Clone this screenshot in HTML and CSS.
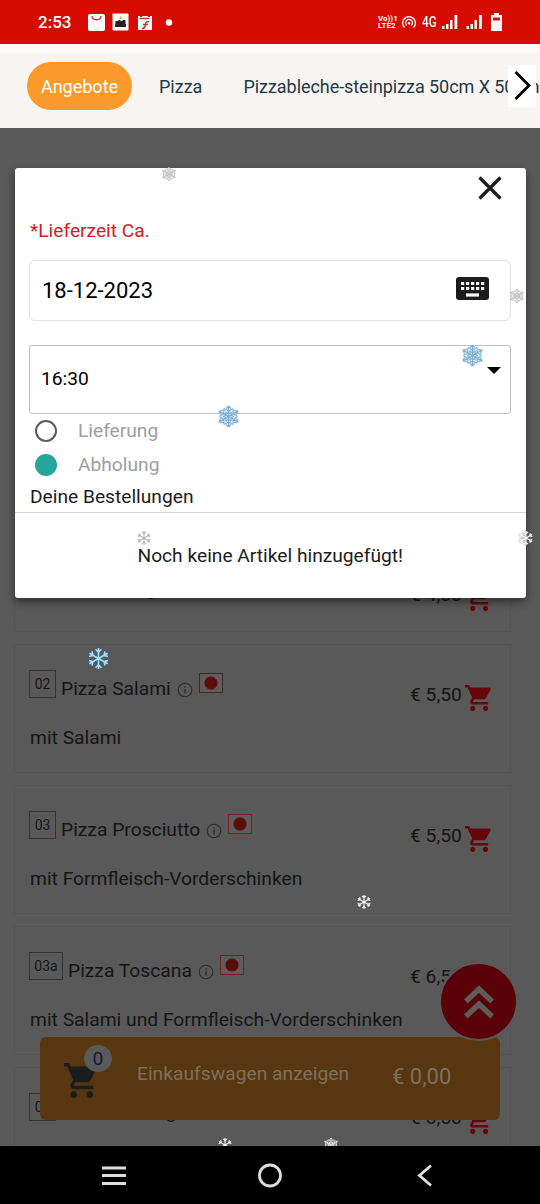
FILE: index.html
```html
<!DOCTYPE html>
<html lang="de">
<head>
<meta charset="utf-8">
<title>Bestellung</title>
<link rel="stylesheet" href="styles.css">
</head>
<body>
<svg class="defs" aria-hidden="true">
  <symbol id="cart" viewBox="1 2 21 20" preserveAspectRatio="none"><path d="M7 18c-1.1 0-1.99.9-1.99 2S5.900 22 7 22s2-.9 2-2-.9-2-2-2zM1 2v2h2l3.600 7.590-1.350 2.450c-.160.280-.250.610-.250.960 0 1.100.900 2 2 2h12v-2H7.420c-.140 0-.250-.110-.250-.250l.030-.120.900-1.630h7.450c.750 0 1.410-.410 1.750-1.030l3.580-6.490A1 1 0 0 0 20.010 4H5.210l-.940-2H1zm16 16c-1.100 0-1.990.900-1.990 2s.890 2 1.990 2 2-.900 2-2-.900-2-2-2z"/></symbol>
  <symbol id="info" viewBox="0 0 16 16"><circle cx="8" cy="8" r="6.800" fill="none" stroke="currentColor" stroke-width="1.100"/><path d="M8 7v4.500M8 4.200v1.500" stroke="currentColor" stroke-width="1.300"/></symbol>
  <symbol id="flake" viewBox="-10 -10 20 20"><g fill="none" stroke="currentColor" stroke-width="1.500">
    <path id="a" d="M0 0V-10M-2.800 -8.800L0 -6L2.800 -8.800"/><use href="#a" transform="rotate(60)"/><use href="#a" transform="rotate(120)"/><use href="#a" transform="rotate(180)"/><use href="#a" transform="rotate(240)"/><use href="#a" transform="rotate(300)"/></g></symbol>
  <symbol id="crystal" viewBox="-10 -10 20 20"><g fill="none" stroke="currentColor" stroke-width="1">
    <path id="b" d="M0 0V-10.500M-2.200 -7.500L0 -10.300L2.200 -7.500M-4.200 -7.500L0 -5.200L4.200 -7.500M-2.500 -4.400L0 -2.500L2.500 -4.400"/><use href="#b" transform="rotate(60)"/><use href="#b" transform="rotate(120)"/><use href="#b" transform="rotate(180)"/><use href="#b" transform="rotate(240)"/><use href="#b" transform="rotate(300)"/></g></symbol>
</svg>
<div class="phone">
  <header class="status">
    <span class="clock">2:53</span>
    <svg class="apps" viewBox="0 0 90 20">
      <rect x="0" y="1" width="17" height="17" rx="2" fill="#fff"/><path d="M4 3c0 5 9 5 9 0" fill="none" stroke="#b7352c" stroke-width="1.300"/>
      <rect x="24.500" y="0.500" width="16" height="17" rx="1" fill="#fff"/><path d="M27.500 8h3v-1h2v1h2v-1h3v4h.5v3H27z" fill="#222"/><path d="M31 6l1.700-3 1.600 3z" fill="#e4a43c"/>
      <path d="M50 3h2v1h2V3h6v1h2V3h2v14H50z" fill="#fff"/><path d="M51.500 5.500h10M61 8.500c-4-.5-3 2-4 5-.5 2-1.500 2-3 2M55 11.500h5" fill="none" stroke="#c43228" stroke-width="1.500"/>
      <circle cx="81" cy="9.500" r="3.200" fill="#fff"/>
    </svg>
    <span class="volte"><span>Vo))1</span><span>LTE2</span></span>
    <svg class="hotspot" viewBox="0 0 16 14" fill="none" stroke="#fff" stroke-width="1.300"><path d="M3.500 12.500a6.400 6.400 0 1 1 9 0M5.700 10.500a3.500 3.500 0 1 1 4.600 0"/><circle cx="8" cy="8.300" r="1.200" fill="#fff" stroke="none"/></svg>
    <span class="net">4G</span>
    <svg class="signals" viewBox="0 0 62 20" fill="#fff"><path d="M0 13h2.500v3H0zM4 11h2.500v5H4zM8 7h2.500v9H8zM12.500 2h2.800v14h-2.800zM24.500 13h2.500v3h-2.500zM28.500 11h2.500v5h-2.500zM32.500 7h2.500v9h-2.500zM37 2h2.800v14H37z"/><path d="M52 0h5v2h3v16H49V2h3z"/><path d="M51 4.500h7v3h-7z" fill="#d80b00"/></svg>
  </header>
  <nav class="tabs">
    <span class="tab active">Angebote</span>
    <span class="tab pizza">Pizza</span>
    <span class="tab long">Pizzableche-steinpizza 50cm X 50cm</span>
    <span class="next"><svg viewBox="0 0 28 42"><path d="M7.500 7L21 20.500 7.500 34" fill="none" stroke="#000" stroke-width="2.800"/></svg></span>
  </nav>
  <main class="stage">
    <section class="list">
      <article class="card short">
        <div class="info"><div class="title"><span class="no">01</span><span class="name">Pizza Margherita</span></div></div>
        <div class="price">€ 4,00<svg><use href="#cart"/></svg></div>
      </article>
      <article class="card">
        <div class="info"><div class="title"><span class="no">02</span><span class="name">Pizza Salami</span><svg class="i"><use href="#info"/></svg><span class="flag"></span></div><p class="desc">mit Salami</p></div>
        <div class="price">€ 5,50<svg><use href="#cart"/></svg></div>
      </article>
      <article class="card">
        <div class="info"><div class="title"><span class="no">03</span><span class="name">Pizza Prosciutto</span><svg class="i"><use href="#info"/></svg><span class="flag red"></span></div><p class="desc">mit Formfleisch-Vorderschinken</p></div>
        <div class="price">€ 5,50<svg><use href="#cart"/></svg></div>
      </article>
      <article class="card">
        <div class="info"><div class="title"><span class="no wide">03a</span><span class="name">Pizza Toscana</span><svg class="i"><use href="#info"/></svg><span class="flag red"></span></div><p class="desc">mit Salami und Formfleisch-Vorderschinken</p></div>
        <div class="price">€ 6,50<svg><use href="#cart"/></svg></div>
      </article>
      <article class="card">
        <div class="info"><div class="title"><span class="no">04</span><span class="name">Pizza Vierling</span></div></div>
        <div class="price">€ 6,50<svg><use href="#cart"/></svg></div>
      </article>
    </section>

    <div class="basket">
      <span class="bag"><svg><use href="#cart"/></svg><span class="count">0</span></span>
      <span class="show">Einkaufswagen anzeigen</span>
      <span class="sum">€ 0,00</span>
    </div>
    <div class="top"><svg viewBox="0 0 30 34" fill="none" stroke="#5f5b5b" stroke-width="5.500"><path d="M1.800 16.500L15 4l13.200 12.500M1.800 31.500L15 19l13.200 12.500"/></svg></div>

    <section class="modal">
      <div class="close"><svg viewBox="0 0 24 24"><path d="M1.500 1.500l21 21M22.500 1.500l-21 21" stroke="#1c1c1c" stroke-width="3.200"/></svg></div>
      <p class="label">*Lieferzeit Ca.</p>
      <div class="date"><span>18-12-2023</span>
        <svg viewBox="0 0 33 23"><rect width="33" height="23" rx="3" fill="#1c1c1c"/><path d="M5 6.500h24M5 11.500h24" stroke="#fff" stroke-width="3.200" stroke-dasharray="3.200 1.800"/><path d="M10 18h13" stroke="#fff" stroke-width="3.200"/></svg>
      </div>
      <div class="time"><span>16:30</span><i class="caret"></i></div>
      <div class="option"><i class="radio"></i>Lieferung</div>
      <div class="option"><i class="radio on"></i>Abholung</div>
      <h2 class="orders">Deine Bestellungen</h2>
      <div class="empty">Noch keine Artikel hinzugefügt!</div>
    </section>

    <div class="snow">
      <svg class="s gray" style="left:162px;top:39px"><use href="#crystal"/></svg>
      <svg class="s gray" style="left:510px;top:161px"><use href="#crystal"/></svg>
      <svg class="l ice" style="left:462px;top:217px"><use href="#crystal"/></svg>
      <svg class="l ice" style="left:218px;top:278px"><use href="#crystal"/></svg>
      <svg class="s gray" style="left:137px;top:403px"><use href="#flake"/></svg>
      <svg class="s edge" style="left:519px;top:403px"><use href="#flake"/></svg>
      <svg class="l blue" style="left:88px;top:520px"><use href="#flake"/></svg>
      <svg class="s" style="left:357px;top:767px"><use href="#flake"/></svg>
      <svg class="s" style="left:218px;top:1010px"><use href="#flake"/></svg>
      <svg class="s" style="left:324px;top:1010px"><use href="#crystal"/></svg>
    </div>
  </main>
  <footer class="keys">
    <svg viewBox="0 0 540 58" fill="none" stroke="#dedede" stroke-width="2.800"><path d="M102 22h24M102 29.500h24M102 37.500h24"/><circle cx="270" cy="29.500" r="10.500"/><path d="M431 19.500L419.500 29.500 431 39.500"/></svg>
  </footer>
</div>
</body>
</html>
```
FILE: styles.css
```css
* { box-sizing: border-box; }
body { margin: 0; font-family: Roboto, sans-serif; color: #1c1c1c; }
p, h2 { margin: 0; font-weight: 400; }
svg { display: block; flex: none; }
.defs { position: absolute; width: 0; height: 0; }
.phone { width: 540px; height: 1204px; display: flex; flex-direction: column; overflow: hidden; }

.status { height: 44px; flex: none; background: #d80b00; color: #fff; display: flex; align-items: center; padding-left: 38px; }
.clock { width: 50px; font-size: 17px; font-weight: 500; }
.apps { width: 90px; height: 20px; margin-top: 1px; }
.volte { width: 20px; margin-left: 200px; font-size: 8px; line-height: 7px; font-weight: 700; display: flex; flex-direction: column; white-space: nowrap; }
.hotspot { width: 16px; height: 14px; margin-left: 3px; }
.net { width: 20px; margin-left: 5px; font-size: 14px; font-weight: 500; transform-origin: left; transform: scaleX(.84); }
.signals { width: 62px; height: 20px; margin-top: 2px; }

.tabs { height: 84px; flex: none; position: relative; display: flex; align-items: flex-start; padding: 18px 0 0 27px; background: linear-gradient(#fefaf7 9px, #f8f4f1 10px); font-size: 18px; line-height: 49px; color: #1e3a47; white-space: nowrap; overflow: hidden; }
.tab { height: 48px; }
.long { letter-spacing: -.06px; }
.active { width: 105px; flex: none; margin-right: 27px; border-radius: 24px; background: #fb9a2b; color: #fff; text-align: center; }
.pizza { width: 84.500px; flex: none; }
.next { position: absolute; right: 4px; top: 21px; width: 28px; height: 42px; background: #fff; }
.next svg { width: 28px; height: 42px; }

.stage { height: 1018px; flex: none; position: relative; overflow: hidden; background: #595959; }
.list { display: flex; flex-direction: column; gap: 12px; padding: 416px 29px 0 14px; }
.card { height: 129px; flex: none; display: flex; justify-content: flex-start; border: 1px solid #535353; padding: 25px 0 0 14px; font-size: 19.250px; color: #151515; white-space: nowrap; }
.short { height: 88px; }
.info { width: 381px; flex: none; }
.title { display: flex; align-items: flex-start; height: 53px; }
.no { width: 27px; height: 28px; border: 1px solid #343434; font-size: 14px; line-height: 26px; text-align: center; }
.wide { width: 34px; }
.name { margin: 7px 6px 0 5px; line-height: 24px; }
.i { width: 16px; height: 16px; margin-top: 12px; color: #2d2d2d; }
.flag { width: 24px; height: 20px; margin: 3px 0 0 6px; border: 1px solid #3b2a2a; background: radial-gradient(circle, #5b0d0d 6px, #625b5b 7px); }
.red { border-color: #6d2325; }
.desc { line-height: 30px; padding-left: 1px; }
.price { display: flex; align-items: flex-start; line-height: 24px; padding-top: 13px; gap: 3px; }
.price svg { width: 27px; height: 26px; margin-top: 2px; fill: #66060a; }

.basket { position: absolute; left: 40px; top: 909px; width: 460px; height: 83px; border-radius: 6px; background: #58360f; display: flex; color: #7d705f; font-size: 19.250px; line-height: 24px; }
.bag { position: relative; width: 97px; padding: 26px 0 0 24px; }
.bag svg { width: 34px; height: 35px; fill: #1a1d20; }
.count { position: absolute; left: 44px; top: 8px; width: 28px; height: 27px; border-radius: 50%; background: #5b5a5a; color: #131a35; text-align: center; line-height: 27px; }
.show { width: 255px; padding-top: 25px; }
.sum { padding-top: 28px; font-size: 22px; }
.top { position: absolute; left: 439px; top: 834px; width: 79px; height: 79px; border: 2px solid #595959; border-radius: 50%; background: #590008; display: flex; align-items: center; justify-content: center; }
.top svg { width: 30px; height: 34px; }

.modal { position: absolute; left: 15px; top: 40px; width: 510.500px; height: 430px; border-radius: 3px; background: #fff; box-shadow: 0 4px 8px rgba(0,0,0,.45); font-size: 19.200px; line-height: 24px; }
.close { display: flex; justify-content: flex-end; height: 51px; padding: 8px 24px 0 0; }
.close svg { width: 24px; height: 24px; }
.label { height: 41px; padding-left: 15px; color: #d51b22; }
.date, .time { margin: 0 14px 0 14px; width: 482px; display: flex; justify-content: space-between; color: #000; }
.date { height: 61px; border: 1px solid #e0e0e0; border-radius: 6px; padding: 0 21px 0 12px; align-items: center; font-size: 22px; }
.date svg { width: 33px; height: 23px; margin-top: -4px; }
.time { height: 69px; margin-top: 24px; border: 1px solid #c1c1c1; border-radius: 3px; padding: 21px 9px 0 11px; }
.caret { width: 14px; height: 7px; background: #000; clip-path: polygon(0 0, 100% 0, 50% 100%); }
.option { height: 34px; padding-left: 20px; display: flex; align-items: center; color: #9e9e9e; }
.radio { width: 22px; height: 22px; margin-right: 21px; border: 2px solid #5a5a5a; border-radius: 50%; }
.on { border: 0; background: #26a69a; }
.orders { height: 31px; padding: 3px 0 0 15px; font-size: 19.200px; line-height: 24px; border-bottom: 1px solid #d5d5d5; }
.empty { text-align: center; padding-top: 31px; }

.snow svg { position: absolute; overflow: visible; color: #fff; }
.snow .s { width: 14px; height: 14px; }
.snow .l { width: 21px; height: 21px; }
.snow .gray { color: #b5b5b5; }
.snow .ice { color: #7fb0d3; filter: drop-shadow(0 0 1px #b5d4e8); }
.snow .edge { filter: drop-shadow(0 0 1px #777); }
.snow .blue { color: #a9ddf7; filter: drop-shadow(0 0 1px #27648a); }
.keys { height: 58px; flex: none; background: #000; }
.keys svg { width: 540px; height: 58px; }
```
